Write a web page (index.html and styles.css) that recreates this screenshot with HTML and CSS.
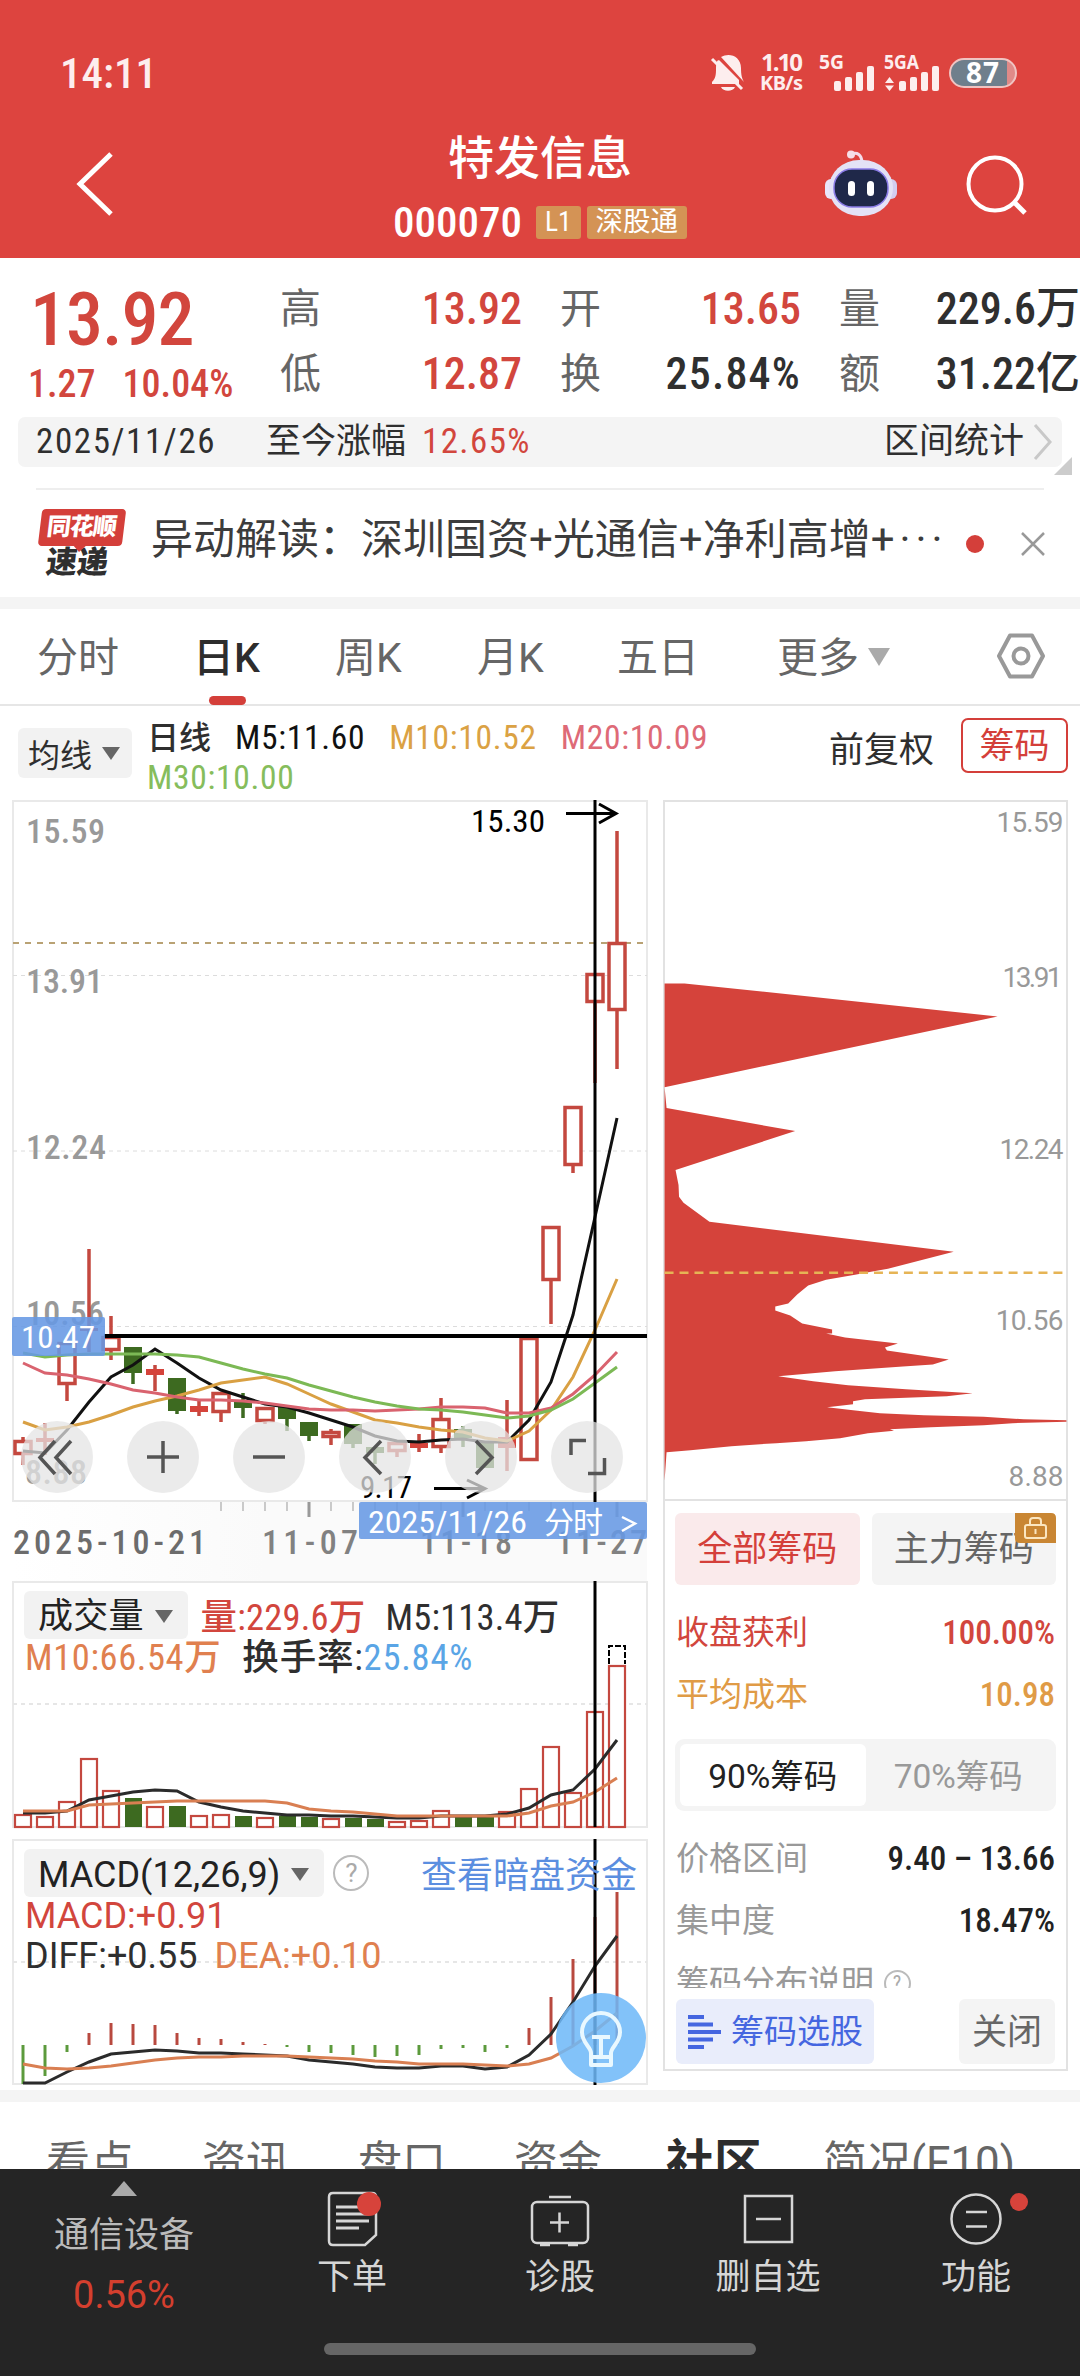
FILE: index.html
```
<!DOCTYPE html>
<html lang="zh-CN">
<head>
  <meta charset="UTF-8">
  <title>特发信息 000070</title>
  <link rel="stylesheet" href="styles.css">
</head>
<body>
  <header class="top">
    <div class="status">
      <span class="clock">14:11</span>
      <svg class="status-icons" width="325" height="50" viewBox="705 48 325 50">
        <g fill="#fdeeee">
          <path d="M716 58 L738 80 L738 84 L711 84 L711 82 C715 78 715 74 715 68 C715 63 716 60 718 60 Z M720 57 C728 52 740 56 740 68 C740 75 741 79 743 82 Z M720 87 H734 C732 92 722 92 720 87 Z"/>
          <path d="M711 59 L741 89" stroke="#fdeeee" stroke-width="3"/>
          <text x="760" y="71" class="st" textLength="42">1.10</text>
          <text x="759" y="90" class="st st-s" textLength="43">KB/s</text>
          <text x="818" y="69" class="st st-s" textLength="25" lengthAdjust="spacingAndGlyphs">5G</text>
          <rect x="833" y="81" width="7" height="10" rx="2"/><rect x="844" y="77" width="7" height="14" rx="2"/><rect x="855" y="72" width="7" height="19" rx="2"/><rect x="866" y="66" width="7" height="25" rx="2"/>
          <text x="883" y="69" class="st st-s" textLength="35" lengthAdjust="spacingAndGlyphs">5GA</text>
          <path d="M884 83 L888.500 77 L893 83 Z M884 85.500 L888.500 91 L893 85.500 Z"/>
          <rect x="898" y="81" width="7" height="10" rx="2"/><rect x="909" y="77" width="7" height="14" rx="2"/><rect x="920" y="72" width="7" height="19" rx="2"/><rect x="931" y="66" width="7" height="25" rx="2"/>
        </g>
        <rect x="949" y="59" width="66" height="28" rx="14" fill="#e08a88"/>
        <path d="M963 59 H1006 V87 H963 A14 14 0 0 1 963 59 Z" fill="#6f7f8c"/>
        <rect x="949" y="59" width="66" height="28" rx="14" fill="none" stroke="#f0c4c2" stroke-width="2"/>
        <text x="965" y="83" class="st st-b" textLength="33">87</text>
      </svg>
    </div>
    <div class="titlebar">
      <svg class="back" width="40" height="68" viewBox="0 0 40 68"><path d="M36 4 L5 34 L36 64" fill="none" stroke="#fff" stroke-width="5"/></svg>
      <div class="stock">
        <h1>特发信息</h1>
        <div class="code"><span class="num">000070</span><i>L1</i><i>深股通</i></div>
      </div>
      <svg class="robot" width="72" height="67" viewBox="0 0 72 67">
        <path d="M26 4 Q36 1 37 12" fill="none" stroke="#f4dcea" stroke-width="3"/>
        <circle cx="26" cy="4.500" r="4" fill="#f6dfe8"/>
        <rect x="0" y="29" width="12" height="20" rx="6" fill="#e9e6fa"/><rect x="60" y="29" width="12" height="20" rx="6" fill="#d3cdf0"/>
        <rect x="4" y="10" width="64" height="56" rx="30" fill="#e4e2f6"/>
        <rect x="9" y="19" width="54" height="38" rx="18" fill="#1f2849" stroke="#8a7be6" stroke-width="1.500"/>
        <rect x="23" y="31" width="7" height="15" rx="3.500" fill="#fff"/><rect x="42" y="31" width="7" height="15" rx="3.500" fill="#fff"/>
      </svg>
      <svg class="search" width="62" height="62" viewBox="0 0 62 62" fill="none" stroke="#fff" stroke-width="4"><circle cx="29" cy="29" r="26.500"/><path d="M48 47 L59 58" stroke-width="5"/></svg>
    </div>
  </header>

  <section class="quote">
    <b class="price num">13.92</b>
    <span class="k">高</span><span class="v up">13.92</span>
    <span class="k">开</span><span class="v up">13.65</span>
    <span class="k">量</span><span class="v">229.6万</span>
    <div class="change num"><span>1.27</span><span>10.04%</span></div>
    <span class="k">低</span><span class="v up">12.87</span>
    <span class="k">换</span><span class="v wide">25.84%</span>
    <span class="k">额</span><span class="v">31.22亿</span>
  </section>

  <div class="range">
    <span class="date">2025/11/26</span><span class="cjk">至今涨幅</span><span class="pct">12.65%</span>
    <span class="stat">区间统计</span>
    <svg width="20" height="38" viewBox="0 0 20 38"><path d="M2 2 L17 19 L2 36" fill="none" stroke="#c8c8c8" stroke-width="3"/></svg>
    <i class="fold"></i>
  </div>

  <div class="news">
    <div class="logo"><span class="logo-a">同花顺</span><span class="logo-b">速递</span></div>
    <p>异动解读：深圳国资+光通信+净利高增+<span class="dots">···</span></p>
    <i class="dot"></i>
    <svg width="26" height="26" viewBox="0 0 26 26"><path d="M2 2 L24 24 M24 2 L2 24" stroke="#999" stroke-width="2.500"/></svg>
  </div>

  <nav class="periods">
    <a>分时</a><a class="on">日K</a><a>周K</a><a>月K</a><a>五日</a><a>更多<i class="tri"></i></a>
    <svg width="50" height="46" viewBox="0 0 50 46" fill="none" stroke="#999" stroke-width="4"><path d="M14 2.500 H36 L47 23 L36 43.500 H14 L3 23 Z" stroke-linejoin="round"/><circle cx="25" cy="23" r="7.500"/></svg>
  </nav>

  <div class="ma">
    <span class="pick">均线<i class="tri"></i></span>
    <p class="num"><span class="cjk">日线</span><span class="m5">M5:11.60</span><span class="m10">M10:10.52</span><span class="m20">M20:10.09</span><span class="m30">M30:10.00</span></p>
    <span class="fq">前复权</span>
    <span class="chip-btn">筹码</span>
  </div>

  <main class="main">
    <div class="charts">
      <svg id="kline" class="chart" width="637" height="781" viewBox="12 800 637 781">
        <defs><linearGradient id="fade"><stop offset="0" stop-color="#fff"/><stop offset=".4" stop-color="#fafafa"/></linearGradient></defs>
        <rect x="13" y="1502" width="634" height="79" fill="url(#fade)"/>
        <rect x="13" y="801" width="634" height="700" fill="#fff" stroke="#e9e9e9" stroke-width="2"/>
        <path d="M13 975.500 H647 M13 1151 H647 M13 1326.500 H647" stroke="#dcdcdc" stroke-dasharray="4 4"/>
        <path d="M13 943 H647" stroke="#b9a274" stroke-width="2" stroke-dasharray="6 6"/>
        <g class="axis">
          <text x="26" y="843" textLength="79">15.59</text>
          <text x="26" y="993" textLength="77">13.91</text>
          <text x="26" y="1159" textLength="80">12.24</text>
          <text x="26" y="1325" textLength="78">10.56</text>
          <text x="25" y="1484" textLength="62">8.88</text>
        </g>
        <g id="candles"></g>
        <g class="mark">
          <text x="471" y="832" textLength="74" lengthAdjust="spacingAndGlyphs">15.30</text>
          <path d="M566 813.500 H616 M599 804 L616 813.500 L599 823"/>
          <text x="360" y="1498" textLength="52">9.17</text>
          <path d="M434 1488.500 H485 M467 1480 L485 1488.500 L467 1498"/>
        </g>
        <g class="hair"><path d="M595 800 V1502"/><path d="M104 1336 H647" stroke-width="4"/></g>
        <rect x="12" y="1317" width="93" height="39" rx="2" fill="#6699e4" fill-opacity=".88"/>
        <text x="21" y="1348" class="tag" textLength="74" lengthAdjust="spacingAndGlyphs">10.47</text>
        <g id="buttons"></g>
        <g id="ticks"></g>
        <g class="axis days">
          <text x="13" y="1554" textLength="193">2025-10-21</text>
          <text x="262" y="1554" textLength="96" opacity=".85">11-07</text>
          <text x="420" y="1554" textLength="92" opacity=".85">11-18</text>
          <text x="556" y="1554" textLength="91" opacity=".85">11-27</text>
        </g>
        <rect x="359" y="1502" width="288" height="37" rx="2" fill="#6699e4" fill-opacity=".88"/>
        <text x="368" y="1533" class="tag" textLength="159" lengthAdjust="spacingAndGlyphs">2025/11/26</text>
        <text x="544" y="1533" class="tag tag-cjk" textLength="59">分时</text>
        <path d="M622 1517 L635 1523.500 L622 1531" fill="none" stroke="#fff" stroke-width="2.500"/>
      </svg>

      <div class="panel volume">
        <svg id="volume" class="chart" width="637" height="248" viewBox="12 1580 637 248">
          <rect x="13" y="1581" width="634" height="245" fill="#fff" stroke="#e9e9e9" stroke-width="2"/>
          <path d="M13 1703 H647" stroke="#e6e6e6" stroke-width="2" stroke-dasharray="4 4"/>
        </svg>
        <div class="legend">
          <div><span class="pick">成交量<i class="tri"></i></span><span class="up">量:229.6万</span><span>M5:113.4万</span></div>
          <div><span class="or">M10:66.54万</span><span>换手率:<em>25.84%</em></span></div>
        </div>
      </div>

      <div class="panel macd">
        <svg id="macd" class="chart" width="637" height="246" viewBox="12 1838 637 246">
          <rect x="13" y="1839" width="634" height="244" fill="#fff" stroke="#e9e9e9" stroke-width="2"/>
          <path d="M13 1961 H647" stroke="#e6e6e6" stroke-width="2" stroke-dasharray="4 4"/>
        </svg>
        <div class="legend">
          <div><span class="pick">MACD(12,26,9)<i class="tri"></i></span><b class="help">?</b><span class="link">查看暗盘资金</span></div>
          <div><span class="up">MACD:+0.91</span></div>
          <div><span>DIFF:+0.55</span><span class="or">DEA:+0.10</span></div>
        </div>
        <svg class="bulb" width="90" height="90" viewBox="556 1992 90 90" fill="none" stroke="#e9f8ff" stroke-width="4">
          <circle cx="601" cy="2037" r="45" fill="#6db8f8" fill-opacity=".86" stroke="none"/>
          <path d="M591 2064 V2052 C591 2046 582 2042 582 2031 A19 19 0 0 1 620 2031 C620 2042 611 2046 611 2052 V2064 Z M591 2056 H611 M592 2036 H610 M601 2036 V2055" stroke-linejoin="round"/>
        </svg>
      </div>
    </div>

    <aside class="chips">
      <svg class="chart" width="405" height="701" viewBox="663 800 405 701">
        <path d="M664 984 H684 L998 1017 L664 1088 L666 1109 L795 1132 L675 1171 L678 1186 L678.500 1198 L683 1204 L709 1223 L954 1253 L888 1270 L855 1276 L826 1281 L808 1287 L797 1296 L788 1305 L775 1308 V1312 L790 1317 L802 1325 L832 1331 V1335 H826 L845 1339 L898 1345 L885 1349 L887 1352 L949 1361 L933 1366 L903 1368 L835 1373 L778 1378 L813 1383 L848 1387 L906 1391 L973 1395 L947 1398 L865 1401 L853 1403 V1406 L827 1409 L853 1412 L880 1415 L924 1417 L984 1418.500 L1024 1421 L1067 1422 V1423.500 L1013 1425 L984 1427 L931 1429 L890 1431 L894 1432.500 L868 1435 L840 1440 L806 1443 L776 1445 L731 1448 L690 1452 L666 1454 L664 1483 Z" fill="#d5433b"/>
        <path d="M664 1274 H1064" stroke="#e6b455" stroke-width="2.500" stroke-dasharray="9 6"/>
        <g class="scale">
          <text x="997" y="832" textLength="67">15.59</text>
          <text x="1003" y="988" textLength="60">13.91</text>
          <text x="1000" y="1160" textLength="64">12.24</text>
          <text x="996" y="1332" textLength="68">10.56</text>
          <text x="1009" y="1488" textLength="55">8.88</text>
        </g>
      </svg>
      <div class="chips-info">
        <div class="two">
          <span class="all">全部筹码</span>
          <span>主力筹码<svg class="lock" width="41" height="30" viewBox="0 0 41 30"><path d="M0 0 H36 Q41 0 41 5 V30 H5 Q0 30 0 25 Z" fill="#c98633"/><rect x="10" y="12" width="21" height="13" rx="2" fill="none" stroke="#fbe6c0" stroke-width="2"/><path d="M15 12 V8 Q15 5 18 5 H23 Q26 5 26 8 V12 M20.500 16 V21" fill="none" stroke="#fbe6c0" stroke-width="2"/></svg></span>
        </div>
        <dl class="up"><dt>收盘获利</dt><dd>100.00%</dd></dl>
        <dl class="cost"><dt>平均成本</dt><dd>10.98</dd></dl>
        <div class="seg"><span class="on">90%筹码</span><span>70%筹码</span></div>
        <dl><dt>价格区间</dt><dd>9.40 – 13.66</dd></dl>
        <dl><dt>集中度</dt><dd>18.47%</dd></dl>
        <dl class="cut"><dt>筹码分布说明 <b class="help">?</b></dt></dl>
      </div>
      <div class="chips-foot">
        <span class="select"><svg width="33" height="34" viewBox="0 0 33 34" stroke="#4566e0" stroke-width="4"><path d="M0 2 H16 M0 9.500 H25 M0 17 H33 M0 24.500 H25 M0 32 H16"/></svg>筹码选股</span>
        <span class="close">关闭</span>
      </div>
    </aside>
  </main>

  <nav class="sections">
    <a>看点</a><a>资讯</a><a>盘口</a><a>资金</a><a class="on">社区</a><a>简况(F10)</a>
  </nav>

  <footer class="bottom">
    <div class="items">
      <div class="sector"><i class="tri-up"></i><span>通信设备</span><b>0.56%</b></div>
      <div class="item">
        <svg width="60" height="58" viewBox="322 2190 60 58" fill="none" stroke="#d6d6d6" stroke-width="2.500">
          <path d="M333 2193 H372 Q376 2193 376 2197 V2235 L365 2245 H333 Q329 2245 329 2241 V2197 Q329 2193 333 2193 Z"/><path d="M336 2207 H369 M336 2214 H369 M336 2221 H369 M336 2228 H359" stroke-width="3"/><circle cx="369" cy="2204" r="12" fill="#d7433b" stroke="none"/>
        </svg><span>下单</span></div>
      <div class="item">
        <svg width="60" height="58" viewBox="530 2190 60 58" fill="none" stroke="#d6d6d6" stroke-width="2.500">
          <rect x="532" y="2202" width="56" height="41" rx="5"/><path d="M549 2197 H571 M540 2245 H550 M568 2245 H578 M550 2222.500 H569 M559.500 2212.500 V2232.500"/>
        </svg><span>诊股</span></div>
      <div class="item">
        <svg width="60" height="58" viewBox="737 2190 60 58" fill="none" stroke="#d6d6d6" stroke-width="2.500">
          <rect x="744" y="2196" width="47" height="46"/><path d="M755 2219 H780"/>
        </svg><span>删自选</span></div>
      <div class="item">
        <svg width="110" height="58" viewBox="920 2190 110 58" fill="none" stroke="#d6d6d6" stroke-width="2.500">
          <circle cx="975" cy="2219" r="24.500"/><path d="M965 2212 H986 M965 2226.500 H986"/><circle cx="1018" cy="2202" r="9" fill="#d7433b" stroke="none"/>
        </svg><span>功能</span></div>
    </div>
    <div class="home"></div>
  </footer>

  <script src="charts.js"></script>
</body>
</html>
```

FILE: styles.css
```
* { box-sizing: border-box; }
body { margin: 0; width: 1080px; height: 2376px; overflow: hidden; display: flex; flex-direction: column; background: #fff; color: #2f2f2f; font-family: Roboto, "Noto Sans CJK SC", sans-serif; font-size: 35px; font-stretch: 87%; }
i, em { font-style: normal; }
h1, p, dl, dd { margin: 0; }
svg { display: block; flex: none; }
.up { color: #d2463d; }
.num { font-weight: 500; }
.tri { display: inline-block; border: 9px solid transparent; border-top: 13px solid #666; border-bottom: 0; }

/* header */
.top { height: 258px; flex: none; background: #dd443f; color: #fff; }
.status { display: flex; align-items: center; justify-content: space-between; height: 98px; padding: 48px 49px 0 60px; }
.clock { font-size: 43px; font-weight: 500; line-height: 50px; color: #fdeeee; }
.st { font: bold 24px "Noto Sans", sans-serif; }
.st-s { font-size: 20px; }
.st-b { font-size: 28px; fill: #fff; }
.titlebar { display: flex; height: 160px; padding-left: 75px; }
.back { margin-top: 52px; }
.stock { width: 692px; padding: 28px 0 0 158px; text-align: center; }
.stock h1 { font-size: 46px; font-weight: 450; line-height: 64px; }
.code { display: flex; align-items: center; justify-content: center; gap: 6px; height: 36px; margin-top: 14px; font-size: 43px; }
.code .num { margin-right: 8px; }
.code i { height: 33px; line-height: 32px; padding: 0 9px; font-size: 27.500px; background: #d49355; border-radius: 3px; }
.robot { margin: 52px 0 0 18px; }
.search { margin: 57px 0 0 69px; }

/* quote */
.quote { display: grid; grid-template-columns: 252px 41px 201px 79px 200px 79px 200px; grid-template-rows: 65px 65px; height: 159px; padding: 18px 0 0 28px; line-height: 66px; white-space: nowrap; flex: none; }
.price { font-size: 74px; color: #d2463d; line-height: 88px; padding-left: 2px; height: 65px; letter-spacing: -1px; }
.change { display: flex; gap: 27px; font-size: 38px; color: #d2463d; padding-top: 10px; }
.k { font-size: 41px; color: #666; text-align: right; }
.v { font-size: 44px; font-weight: 500; text-align: right; }
.wide { letter-spacing: 1.200px; }

.range { position: relative; display: flex; align-items: center; height: 50px; flex: none; margin: 0 18px; padding: 0 9px 0 18px; background: #f4f4f4; border-radius: 7px; line-height: 50px; }
.date { width: 230px; letter-spacing: 1.600px; font-weight: 450; }
.pct { color: #d2463d; margin-left: 16px; letter-spacing: 1.400px; font-weight: 450; }
.stat { margin: 0 9px 0 auto; }
.fold { position: absolute; right: -10px; bottom: -8px; border-left: 18px solid transparent; border-bottom: 18px solid #ccc; }

/* news */
.news { display: flex; align-items: center; flex: none; height: 109px; margin: 21px 36px 0; border-top: 2px solid #eee; }
.logo { display: flex; flex-direction: column; align-items: center; flex: none; width: 87px; transform: skewX(-7deg); font-weight: 900; }
.logo-a { position: relative; width: 84px; height: 37px; line-height: 36px; text-align: center; font-size: 24px; color: #fff; background: #d43f3a; border-radius: 4px; letter-spacing: -1px; }
.logo-a::after { content: ""; position: absolute; left: 36px; top: 37px; border: 6px solid transparent; border-top-color: #d43f3a; border-bottom: 0; }
.logo-b { font-size: 31px; line-height: 33px; }
.news p { flex: none; width: 843px; padding: 0 0 7px 28px; font-size: 42px; font-stretch: 100%; line-height: 60px; white-space: nowrap; color: #3c3c3c; }
.dots { letter-spacing: 5px; margin-left: 5px; }
.dot { flex: none; width: 18px; height: 18px; border-radius: 50%; background: #d43f3a; }
.news svg { margin-left: 36px; }

/* period tabs */
.periods { position: relative; display: flex; align-items: center; flex: none; height: 109px; padding: 3px 0 0 37px; border-top: 12px solid #f4f4f4; border-bottom: 2px solid #e6e6e6; font-size: 41px; font-stretch: 100%; line-height: 60px; color: #666; }
.periods a { width: 140px; white-space: nowrap; }
.periods a:first-child { width: 156px; }
.periods a:nth-child(2) { width: 142px; }
.periods a:nth-child(3) { width: 142px; }
.periods a:nth-child(5) { width: 160px; }
.periods a:nth-child(6) { width: 219px; }
.periods .on { position: relative; color: #2d2d2d; font-weight: 500; }
.periods .on::after { content: ""; position: absolute; left: 16px; bottom: -17px; width: 37px; height: 9px; border-radius: 5px; background: #d43f3a; }
.periods .tri { border-width: 18px 11px 0; border-top-color: #aaa; margin: 0 0 6px 9px; }
.periods svg { margin-bottom: 4px; }

.ma { display: flex; height: 94px; flex: none; padding: 12px 12px 0 18px; }
.pick { display: inline-flex; align-items: center; flex: none; background: #f2f2f2; border-radius: 6px; }
.ma .pick { width: 114px; height: 50px; margin-top: 10px; padding-left: 10px; gap: 10px; font-size: 32px; }
.ma p { flex: none; width: 697px; height: 84px; padding-left: 15px; font-size: 33.500px; letter-spacing: .7px; line-height: 40px; font-weight: 450; white-space: nowrap; }
.ma p span { margin-right: 24px; }
.ma .cjk { font-size: 32px; letter-spacing: 0; }
.m5 { color: #111; }
.m10 { color: #dba244; }
.m20 { color: #de6a77; }
.ma .m30 { display: block; color: #86bd5c; }
.fq { flex: none; width: 132px; line-height: 66px; }
.chip-btn { flex: none; width: 107px; height: 55px; line-height: 53px; text-align: center; border: 2px solid #d43f3a; border-radius: 7px; color: #d43f3a; }

/* charts */
.main { display: flex; flex: none; height: 1290px; padding: 0 12px; gap: 14px; }
.charts { width: 637px; flex: none; }
.panel { position: relative; }
.macd { margin-top: 10px; }
.chart text { font-family: Roboto, "Noto Sans CJK SC", sans-serif; }
.axis { fill: #999; font-size: 34px; font-weight: 500; }
.days { fill: #6c6c6c; }
.mark { fill: #000; font-size: 31px; }
.mark path { fill: none; stroke: #000; stroke-width: 3px; }
.hair { stroke: #000; stroke-width: 3px; }
.tag { fill: #fff; font-size: 31px; }
.tag-cjk { font-size: 30px; }
.scale { fill: #999; font-size: 28px; font-stretch: 100%; }
.legend { position: absolute; left: 13px; top: 10px; right: 12px; line-height: 40px; font-size: 36.500px; white-space: nowrap; font-weight: 450; }
.legend > div { display: flex; height: 40px; gap: 21px; }
.legend > div:first-child { height: 48px; line-height: 54px; gap: 13px; margin-bottom: -1px; }
.legend .pick { height: 48px; margin-left: -1px; padding: 3px 15px 0 14px; gap: 11px; font-weight: 400; font-size: 35px; color: #222; }
.volume .legend { letter-spacing: .2px; }
.volume .legend > div:first-child span:last-child { margin-left: 7px; }
.volume .legend > div:last-child span:last-child { letter-spacing: .8px; }
.legend .or { color: #e0804f; }
.volume .or { letter-spacing: .6px; }
.legend em { color: #5aa5e6; }
.macd .legend { font-stretch: 100%; font-size: 36px; font-weight: 420; }
.macd .legend > div:last-child { gap: 17px; }
.macd .legend .pick { font-size: 36px; }
.help { display: inline-flex; align-items: center; justify-content: center; width: 36px; height: 36px; border: 2px solid #bbb; border-radius: 50%; font-size: 26px; font-weight: 400; color: #aaa; }
.legend .help { margin: 6px 0 0 -4px; }
.macd .link { margin-left: auto; color: #5b8ee0; font-weight: 400; font-size: 36px; }
.bulb { position: absolute; left: 544px; top: 154px; }

/* chips */
.chips { width: 405px; height: 1271px; border: 2px solid #e2e2e2; }
.chips > .chart { margin: -2px 0 0 -2px; border-bottom: 2px solid #e2e2e2; }
.chips-info { height: 487px; overflow: hidden; padding: 12px 10px 0; }
.two { display: flex; gap: 12px; height: 72px; margin-bottom: 17px; }
.two span { position: relative; flex: 1; line-height: 74px; text-align: center; background: #f4f4f4; border-radius: 6px; color: #666; }
.two .all { background: #faeaeb; color: #d43f3a; }
.lock { position: absolute; right: 0; top: 0; }
.chips dl { display: flex; justify-content: space-between; height: 62px; line-height: 62px; font-size: 33px; padding: 0 1px; }
.chips dt { color: #999; }
.chips dd { color: #222; font-weight: 500; }
.chips .up dt, .chips .up dd { color: #d2463d; }
.chips .cost dt, .chips .cost dd { color: #e09b46; }
.seg { display: flex; height: 72px; margin: 13px 0 17px; padding: 5px; background: #f4f4f4; border-radius: 9px; font-size: 33.500px; font-stretch: 100%; line-height: 66px; text-align: center; color: #999; }
.seg span { flex: 1; }
.seg .on { background: #fff; border-radius: 6px; color: #222; }
.chips .help { width: 27px; height: 27px; font-size: 20px; margin-left: 2px; vertical-align: 4px; }
.chips-foot { display: flex; justify-content: space-between; padding: 11px 11px 0; line-height: 67px; }
.select { display: flex; align-items: center; gap: 10px; width: 198px; height: 65px; padding-left: 12px; background: #e9edfb; border-radius: 6px; font-size: 33px; color: #4566e0; }
.close { width: 96px; height: 65px; text-align: center; background: #f4f4f4; border-radius: 6px; color: #666; }

/* lower tabs */
.sections { display: flex; flex: none; height: 79px; overflow: hidden; padding: 30px 0 0 46px; border-top: 12px solid #f4f4f4; font-size: 44px; line-height: 62px; color: #666; white-space: nowrap; }
.sections a { width: 156px; flex: none; }
.sections .on { font-size: 48px; font-weight: 700; color: #2d2d2d; margin-left: -4px; width: 157px; }
.sections a:last-child { font-stretch: 100%; }

.bottom { height: 207px; flex: none; background: #252525; color: #d6d6d6; }
.items { display: flex; height: 174px; padding-left: 20px; }
.sector, .item { flex: none; width: 208px; display: flex; flex-direction: column; align-items: center; }
.item span { line-height: 54px; margin-top: 3px; }
.item svg { margin-top: 21px; }
.sector { margin-right: 20px; padding-top: 12px; color: #bbb; }
.sector span { line-height: 50px; margin-top: 15px; }
.sector b { font-weight: 400; font-size: 38px; font-stretch: 100%; line-height: 50px; margin-top: 9px; color: #d43f2e; }
.tri-up { border: 13px solid transparent; border-bottom: 15px solid #aaa; border-top: 0; }
.home { width: 432px; height: 12px; margin: 0 auto; border-radius: 6px; background: #666; }
```

FILE: charts.js
```
const RED = '#c4483f', GREEN = '#3d6a20';
const x = i => 23 + 22 * i;

function add(id, html) {
  document.getElementById(id).insertAdjacentHTML('beforeend', html);
}

function line(ys, color) {
  const pts = ys.map((y, i) => x(i) + ',' + y).join(' ');
  return `<polyline points="${pts}" fill="none" stroke="${color}" stroke-width="3"/>`;
}

// [kind, body top, body bottom, high, low]; h = hollow, r = red, g = green
const candles = [
  ['h', 1440, 1455, 1437, 1465], ['r', 1438, 1442, 1423, 1455], ['h', 1342, 1385, 1342, 1401],
  ['r', 1328, 1331, 1249, 1352], ['h', 1336, 1351, 1316, 1360], ['g', 1347, 1373, 1347, 1384],
  ['r', 1369, 1375, 1365, 1391], ['g', 1378, 1411, 1378, 1414], ['r', 1406, 1412, 1400, 1416],
  ['h', 1392, 1413, 1392, 1422], ['g', 1402, 1408, 1393, 1418], ['h', 1407, 1422, 1407, 1424],
  ['g', 1407, 1419, 1405, 1431], ['g', 1422, 1436, 1422, 1441], ['h', 1431, 1438, 1429, 1445],
  ['g', 1424, 1444, 1424, 1448], ['g', 1447, 1453, 1447, 1464], ['h', 1442, 1452, 1442, 1457],
  ['r', 1443, 1448, 1434, 1452], ['h', 1418, 1448, 1398, 1453], ['g', 1429, 1438, 1426, 1447],
  ['g', 1443, 1468, 1443, 1468], ['r', 1437, 1448, 1400, 1471], ['h', 1337, 1461, 1337, 1461],
  ['h', 1226, 1281, 1226, 1324], ['h', 1106, 1166, 1106, 1173], ['h', 973, 1003, 973, 1083],
  ['h', 942, 1011, 831, 1069]
];

let out = '';
candles.forEach(([kind, top, bottom, high, low], i) => {
  const c = kind === 'g' ? GREEN : RED;
  out += `<path d="M${x(i)} ${high} V${top} M${x(i)} ${bottom} V${low}" stroke="${c}" stroke-width="3.500"/>`;
  out += kind === 'h'
    ? `<rect x="${x(i) - 8}" y="${top + 1.5}" width="16" height="${bottom - top - 3}" fill="#fff" stroke="${c}" stroke-width="3.500"/>`
    : `<rect x="${x(i) - 9}" y="${top}" width="18" height="${bottom - top}" fill="${kind === 'r' ? '#d5433b' : c}"/>`;
});
out += line([1451,1453,1430,1402,1377,1365,1349,1363,1378,1390,1397,1404,1407,1413,1420,1427,1436,1441,1442,1440,1439,1442,1442,1420,1382,1315,1217,1118], '#111');
out += line([1422,1430,1427,1422,1415,1407,1401,1396,1390,1383,1380,1377,1384,1394,1404,1412,1420,1423,1427,1430,1432,1438,1441,1431,1410,1377,1330,1279], '#d9a043');
out += line([1363,1373,1375,1379,1384,1390,1393,1397,1400,1400,1401,1403,1406,1409,1410,1410,1411,1410,1409,1407,1407,1408,1413,1413,1408,1394,1375,1352], '#d9636f');
out += line([1353,1357,1355,1354,1354,1354,1354,1355,1357,1363,1369,1374,1378,1385,1391,1397,1402,1406,1409,1410,1412,1415,1418,1416,1410,1399,1383,1367], '#7cb955');
add('candles', out);

// round chart controls
const icons = [
  'M55 1441 L40 1457.500 L55 1474 M71 1441 L56 1457.500 L71 1474',
  'M147 1457 H179 M163 1441 V1473',
  'M253 1457 H285',
  'M381 1441 L365 1457.500 L381 1474',
  'M476 1441 L492 1457.500 L476 1474',
  'M571 1455 V1440.500 H586 M604.500 1458 V1473.500 H588'
];
add('buttons', icons.map((d, i) =>
  `<circle cx="${57 + 106 * i}" cy="1457" r="36" fill="#e4e4e4" fill-opacity=".74"/>` +
  `<path d="${d}" fill="none" stroke="#555" stroke-width="3.500"/>`).join(''));

let ticks = '';
for (let i = 9; i < 28; i++) {
  const major = i === 13 || i === 20 || i === 27;
  ticks += `<path d="M${x(i)} 1502 V${major ? 1517 : 1511}" stroke="#999" stroke-width="${major ? 3 : 1}"/>`;
}
add('ticks', ticks);

// volume: top of each bar
const vol = [1813,1815,1800,1757,1789,1797,1805,1805,1814,1813,1815,1816,1815,1816,1817,1817,1818,1820,1819,1809,1816,1816,1810,1787,1745,1791,1710,1664];
const down = [5, 7, 10, 12, 13, 15, 16, 20, 21];
add('volume', vol.map((y, i) => down.includes(i)
  ? `<rect x="${x(i) - 8}" y="${y}" width="17" height="${1826 - y}" fill="${GREEN}"/>`
  : `<rect x="${x(i) - 8}" y="${y + 1}" width="16" height="${1825 - y}" fill="#fff" stroke="${RED}" stroke-width="2.200"/>`).join('') +
  line([1812,1812,1810,1799,1795,1791,1789,1790,1801,1806,1810,1812,1814,1814,1815,1815,1816,1817,1817,1815,1815,1815,1813,1807,1794,1789,1768,1739], '#2b2b2b') +
  line([1810,1810,1810,1804,1803,1802,1801,1800,1800,1800,1800,1800,1802,1808,1810,1811,1813,1815,1815,1815,1815,1815,1815,1812,1805,1801,1791,1777], '#d97f52') +
  '<path d="M609 1663 V1645 H625 V1663" fill="none" stroke="#000" stroke-width="2" stroke-dasharray="6 2"/>' +
  '<path d="M595 1580 V1826" stroke="#000" stroke-width="3"/>');

// macd: end of each bar measured from the zero line at 2044
const macd = [2083,2075,2051,2032,2022,2023,2024,2032,2037,2038,2041,2043,2046,2051,2052,2054,2056,2055,2054,2048,2047,2051,2047,2027,1996,1958,1916,1891];
add('macd', macd.map((y, i) =>
  `<path d="M${x(i)} 2044 V${y}" stroke="${y < 2044 ? '#b8493f' : '#5c9a3c'}" stroke-width="3"/>`).join('') +
  line([2082,2082,2071,2061,2053,2051,2049,2050,2052,2052,2053,2054,2055,2059,2061,2063,2066,2067,2067,2065,2065,2068,2066,2054,2033,2001,1965,1935], '#2b2b2b') +
  line([2063,2067,2068,2067,2065,2062,2059,2057,2056,2056,2055,2055,2055,2056,2057,2058,2060,2061,2063,2063,2063,2064,2065,2063,2057,2045,2030,2012], '#d97f52') +
  '<path d="M595 1838 V2084" stroke="#000" stroke-width="3"/>');
```
